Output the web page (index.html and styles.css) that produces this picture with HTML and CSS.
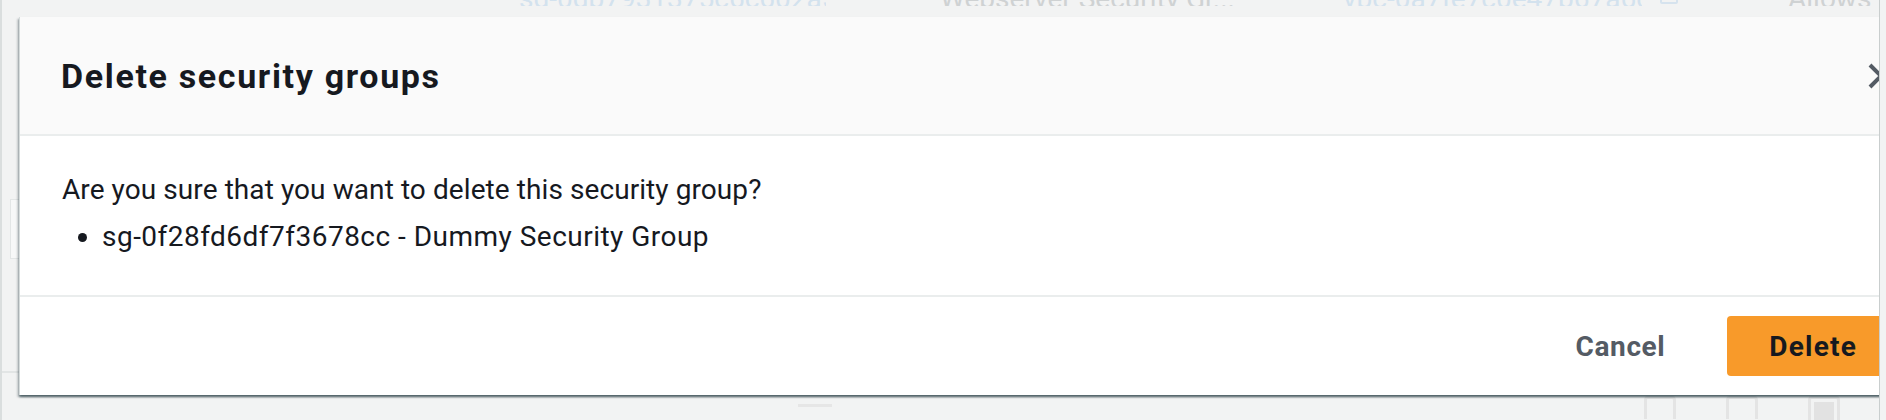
FILE: index.html
```html
<!DOCTYPE html>
<html lang="en">
<head>
<meta charset="utf-8">
<title>Delete security groups</title>
<link rel="stylesheet" href="styles.css">
</head>
<body>
<div class="page">
  <div class="bg-top">
    <span class="bg-check"></span>
    <span class="bg-link bg-sg">sg-0db7931375c6c602a5</span>
    <span class="bg-text bg-name">Webserver Security Gr...</span>
    <span class="bg-link bg-vpc">vpc-0a7fe7c0e47b67a6c5</span>
    <span class="bg-copy"></span>
    <span class="bg-text bg-allow">Allows</span>
  </div>
  <div class="bg-middle">
    <div class="bg-field"></div>
  </div>
  <div class="bg-rowline"></div>
  <div class="bg-bottom">
    <span class="bg-bar"></span>
    <span class="bg-box"></span>
    <span class="bg-box"></span>
    <span class="bg-box bg-box-filled"></span>
  </div>

  <div class="modal" role="dialog" aria-labelledby="modal-title">
    <div class="modal-header">
      <h2 class="modal-title" id="modal-title">Delete security groups</h2>
      <button class="modal-close" aria-label="Close">
        <svg viewBox="0 0 26 26" class="close-icon"><path d="M2 2 L24 24 M24 2 L2 24"/></svg>
      </button>
    </div>
    <div class="modal-body">
      <p class="confirm">Are you sure that you want to delete this security group?</p>
      <ul class="group-list">
        <li>sg-0f28fd6df7f3678cc - Dummy Security Group</li>
      </ul>
    </div>
    <div class="modal-footer">
      <button class="btn btn-link">Cancel</button>
      <button class="btn btn-primary">Delete</button>
    </div>
  </div>

  <div class="scrollbar"></div>
</div>
</body>
</html>
```

FILE: styles.css
```css
html, body {
  margin: 0;
  padding: 0;
}

body {
  width: 1886px;
  height: 420px;
  overflow: hidden;
  background: #f2f3f3;
  font-family: Roboto, "Liberation Sans", sans-serif;
  color: #16191f;
}

.page {
  position: relative;
  width: 1886px;
  height: 420px;
  overflow: hidden;
  border-left: 2px solid #dadede;
  box-sizing: border-box;
}

/* ---- faded page content behind the dialog ---- */
.bg-top {
  display: flex;
  align-items: flex-end;
  height: 10px;
  margin-top: -4px;
  font-size: 28px;
  line-height: 14px;
  overflow: hidden;
  white-space: nowrap;
}

.bg-top > span {
  flex-shrink: 0;
}

.bg-check {
  width: 24px;
  height: 20px;
  margin-left: 36px;
  margin-bottom: 7px;
  border: 2px solid #e2e4e4;
  border-radius: 4px;
  align-self: flex-end;
}

.bg-link {
  color: #d3e2ee;
}

.bg-text {
  color: #cfd2d3;
}

.bg-sg {
  width: 307px;
  margin-left: 453px;
  overflow: hidden;
}

.bg-name {
  width: 307px;
  margin-left: 114px;
}

.bg-vpc {
  width: 299px;
  margin-left: 96px;
  overflow: hidden;
}

.bg-copy {
  width: 14px;
  height: 18px;
  margin-left: 18px;
  margin-bottom: 2px;
  border: 2px solid #d6e3ee;
  border-radius: 2px;
}

.bg-allow {
  margin-left: 110px;
}

.bg-middle {
  padding-top: 193px;
  padding-left: 8px;
}

.bg-field {
  width: 12px;
  height: 58px;
  border: 1px solid #e3e6e6;
  background: #f7f8f8;
}

.bg-rowline {
  margin-top: 112px;
  height: 2px;
  background: #e2e5e5;
}

.bg-bottom {
  display: flex;
  align-items: flex-start;
  margin-top: 23px;
}

.bg-bar {
  width: 34px;
  height: 3px;
  margin-left: 796px;
  margin-top: 8px;
  background: #e6e6e6;
}

.bg-box {
  width: 26px;
  height: 20px;
  margin-left: 50px;
  border: 3px solid #e4e4e4;
  border-bottom: none;
  border-radius: 4px 4px 0 0;
}

.bg-bar + .bg-box {
  margin-left: 812px;
}

.bg-box-filled {
  background: linear-gradient(#f2f3f3 0 3px, #e2e2e2 3px);
  background-clip: content-box;
  padding: 2px 3px 0;
  width: 20px;
}

/* ---- dialog ---- */
.modal {
  position: absolute;
  top: 17px;
  left: 17px;
  width: 1919px;
  background: #ffffff;
  border-left: 1px solid #d5dbdb;
  box-shadow: 0 2px 2px 0 rgba(0, 28, 36, 0.55), 2px 2px 2px 0 rgba(0, 28, 36, 0.15), -2px 2px 2px 0 rgba(0, 28, 36, 0.15);
}

.modal-header {
  display: flex;
  align-items: center;
  justify-content: space-between;
  height: 117px;
  padding: 0 45px 0 41px;
  background: #fafafa;
  border-bottom: 2px solid #eaeded;
}

.modal-title {
  margin: 0;
  font-size: 34px;
  font-weight: 700;
  line-height: 44px;
  letter-spacing: 1.65px;
  color: #16191f;
}

.modal-close {
  display: flex;
  padding: 0;
  border: none;
  background: none;
}

.close-icon {
  width: 26px;
  height: 26px;
  fill: none;
  stroke: #545b64;
  stroke-width: 4;
}

.modal-body {
  padding: 32px 42px 36px 42px;
  border-bottom: 2px solid #eaeded;
  font-size: 28px;
  line-height: 44px;
}

.confirm {
  margin: 0;
  letter-spacing: 0.08px;
}

.group-list {
  margin: 3px 0 0 0;
  padding-left: 40px;
  letter-spacing: 0.48px;
}

.modal-footer {
  display: flex;
  align-items: center;
  justify-content: flex-end;
  gap: 20px;
  height: 98px;
  padding-right: 40px;
}

.btn {
  height: 60px;
  padding: 0 42px;
  border: none;
  border-radius: 4px;
  font-family: Roboto, "Liberation Sans", sans-serif;
  font-size: 28px;
  font-weight: 700;
  cursor: pointer;
}

.btn-link {
  background: transparent;
  color: #545b64;
  letter-spacing: 0.6px;
}

.btn-primary {
  background: #f89a2a;
  color: #16191f;
  letter-spacing: 1.2px;
}

/* ---- right edge strip ---- */
.scrollbar {
  position: absolute;
  top: 0;
  right: 0;
  width: 6px;
  height: 420px;
  background: #f2f3f3;
  border-left: 1px solid #c9cece;
}
```
